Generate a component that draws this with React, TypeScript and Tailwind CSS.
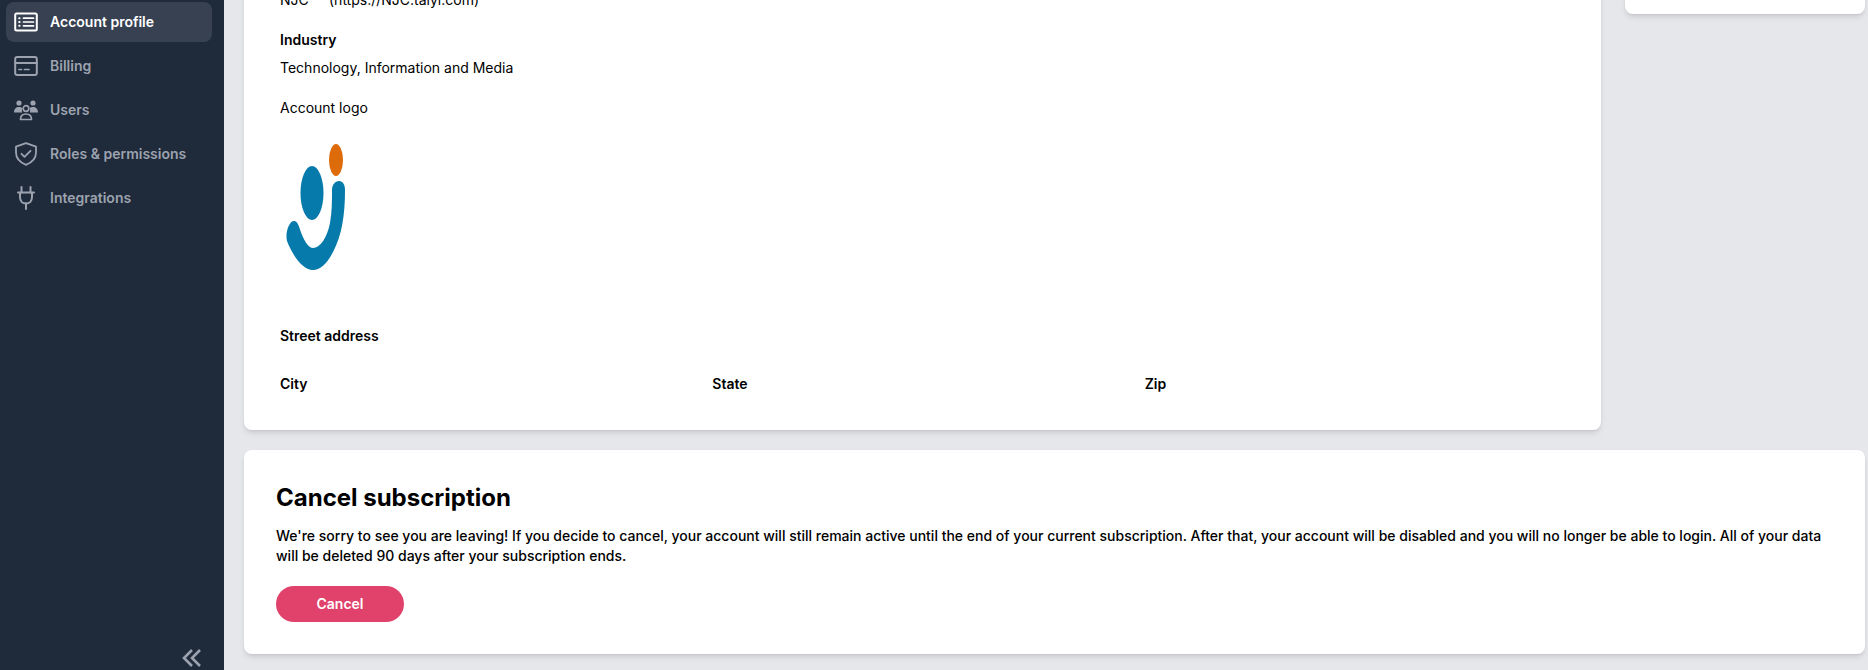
import type { ReactNode } from 'react';

const ListBoxIcon = () => (
  <svg viewBox="0 0 24 24" className="w-6 h-6" fill="none" stroke="currentColor" strokeWidth="2" strokeLinecap="round">
    <rect x="1.2" y="3.5" width="21.6" height="17" rx="1.5" />
    <path d="M9.5 8.2h10M9.5 12h10M9.5 15.8h10" strokeWidth="1.7" />
    <path d="M5.2 8.2h.4M5.2 12h.4M5.2 15.8h.4" strokeWidth="2" />
  </svg>
);

const BillingIcon = () => (
  <svg viewBox="0 0 24 24" className="w-6 h-6" fill="none" stroke="currentColor" strokeWidth="2" strokeLinecap="round">
    <rect x="1.2" y="3" width="21.6" height="18" rx="2" />
    <path d="M1.2 9h21.6" strokeWidth="1.8" />
    <path d="M5 15.5h2.5M10.5 15.5h4.5" strokeWidth="1.7" />
  </svg>
);

const UsersIcon = () => (
  <svg viewBox="0 0 24 24" className="w-6 h-6" fill="currentColor">
    <circle cx="5" cy="5" r="2.6" />
    <circle cx="19" cy="5" r="2.6" />
    <path d="M0 14.5C0 11 2 9 5 9c1.4 0 2.6.4 3.4 1.2-.6 1.2-.7 2.8-.2 4.3H0z" />
    <path d="M24 14.5C24 11 22 9 19 9c-1.4 0-2.6.4-3.4 1.2.6 1.2.7 2.8.2 4.3H24z" />
    <circle cx="12" cy="10.5" r="2.8" fill="none" stroke="currentColor" strokeWidth="1.7" />
    <path d="M6.5 21.5c0-3.5 2.2-5.5 5.5-5.5s5.5 2 5.5 5.5z" fill="none" stroke="currentColor" strokeWidth="1.7" strokeLinejoin="round" />
  </svg>
);

const ShieldIcon = () => (
  <svg viewBox="0 0 24 24" className="w-6 h-6" fill="none" stroke="currentColor" strokeWidth="1.8" strokeLinecap="round" strokeLinejoin="round">
    <path d="M12 1.2 22 4.6v6c0 6-4 10-10 12.2C6 20.6 2 16.6 2 10.6v-6z" />
    <path d="M7.5 11.8l3 3 6-6" />
  </svg>
);

const PlugIcon = () => (
  <svg viewBox="0 0 24 24" className="w-6 h-6" fill="none" stroke="currentColor" strokeWidth="2" strokeLinecap="round" strokeLinejoin="round">
    <path d="M7.5 1v5.5M16.5 1v5.5" />
    <path d="M4 6.5h16M6 6.5v4.5c0 4 2.5 6.5 6 6.5s6-2.5 6-6.5V6.5" />
    <path d="M12 17.5V23" />
  </svg>
);

function NavItem({ icon, label, active }: { icon: ReactNode; label: string; active?: boolean }) {
  return (
    <div className={`flex items-center gap-3 h-10 px-2 rounded-lg text-sm font-semibold ${active ? 'bg-[#374151] text-white' : 'text-[#9ca3af]'}`}>
      {icon}
      <span>{label}</span>
    </div>
  );
}

function Logo() {
  return (
    <svg viewBox="0 0 70 135" className="w-[70px] h-[135px]">
      <ellipse cx="56" cy="20" rx="7" ry="16" fill="#dd6b09" />
      <ellipse cx="32" cy="53" rx="11.5" ry="27" fill="#067aaa" />
      <path
        d="M59 41C63 41 65 45 65 50C65 75 62 95 53 112C47 124 40 130 33 130C22 130 12 114 7 101C5 93 9 81 14 81C18 81 19 87 22 95C25 102 29 108 33 108C40 108 47 98 50 83C52 72 52 60 52 50C52 45 55 41 59 41Z"
        fill="#067aaa"
      />
    </svg>
  );
}

export default function App() {
  return (
    <div className="flex h-[670px] overflow-hidden bg-[#e5e7eb] text-sm text-black font-['Inter',sans-serif]">
      <aside className="relative w-[224px] shrink-0 bg-[#1f2a3a] pl-1.5 pr-3 pt-0.5 flex flex-col gap-1">
        <NavItem active icon={<ListBoxIcon />} label="Account profile" />
        <NavItem icon={<BillingIcon />} label="Billing" />
        <NavItem icon={<UsersIcon />} label="Users" />
        <NavItem icon={<ShieldIcon />} label="Roles & permissions" />
        <NavItem icon={<PlugIcon />} label="Integrations" />
        <svg viewBox="0 0 24 24" className="absolute left-[180px] bottom-0 w-6 h-6 text-[#9ca3af]" fill="none" stroke="currentColor" strokeWidth="2.6">
          <path d="M12 4l-8 8 8 8" />
          <path d="M20 4l-8 8 8 8" />
        </svg>
      </aside>

      <main className="flex-1 pl-5 pr-[3px] flex flex-col gap-5 min-w-0">
        <div className="flex gap-6 items-start -mt-[100px]">
          <section className="flex-1 h-[530px] bg-white rounded-lg shadow-md pl-9 pt-[90px]">
            <div className="flex h-5 leading-5">
              <span className="w-[49px]">NJC</span>
              <span>(https://NJC.taiyi.com)</span>
            </div>
            <div className="mt-[20px] font-semibold leading-5">Industry</div>
            <div className="mt-2 leading-5">Technology, Information and Media</div>
            <div className="mt-5 leading-5">Account logo</div>
            <div className="mt-[22px]">
              <Logo />
            </div>
            <div className="mt-[51px] font-semibold leading-5">Street address</div>
            <div className="mt-7 grid grid-cols-3 font-semibold leading-5 w-[1297px]">
              <span>City</span>
              <span>State</span>
              <span>Zip</span>
            </div>
          </section>
          <div className="w-[240px] h-[114px] shrink-0 bg-white rounded-lg shadow-md" />
        </div>

        <section className="h-[204px] shrink-0 bg-white rounded-lg shadow-md px-8 pt-8">
          <h2 className="text-2xl font-bold leading-8">Cancel subscription</h2>
          <p className="mt-3 leading-5 font-medium">
            We're sorry to see you are leaving! If you decide to cancel, your account will still remain active until the end of your current subscription. After that, your account will be disabled and you will no longer be able to login. All of your data will be deleted 90 days after your subscription ends.
          </p>
          <button className="mt-5 w-32 h-9 rounded-full bg-[#e0426b] text-white font-semibold">Cancel</button>
        </section>
      </main>
    </div>
  );
}
